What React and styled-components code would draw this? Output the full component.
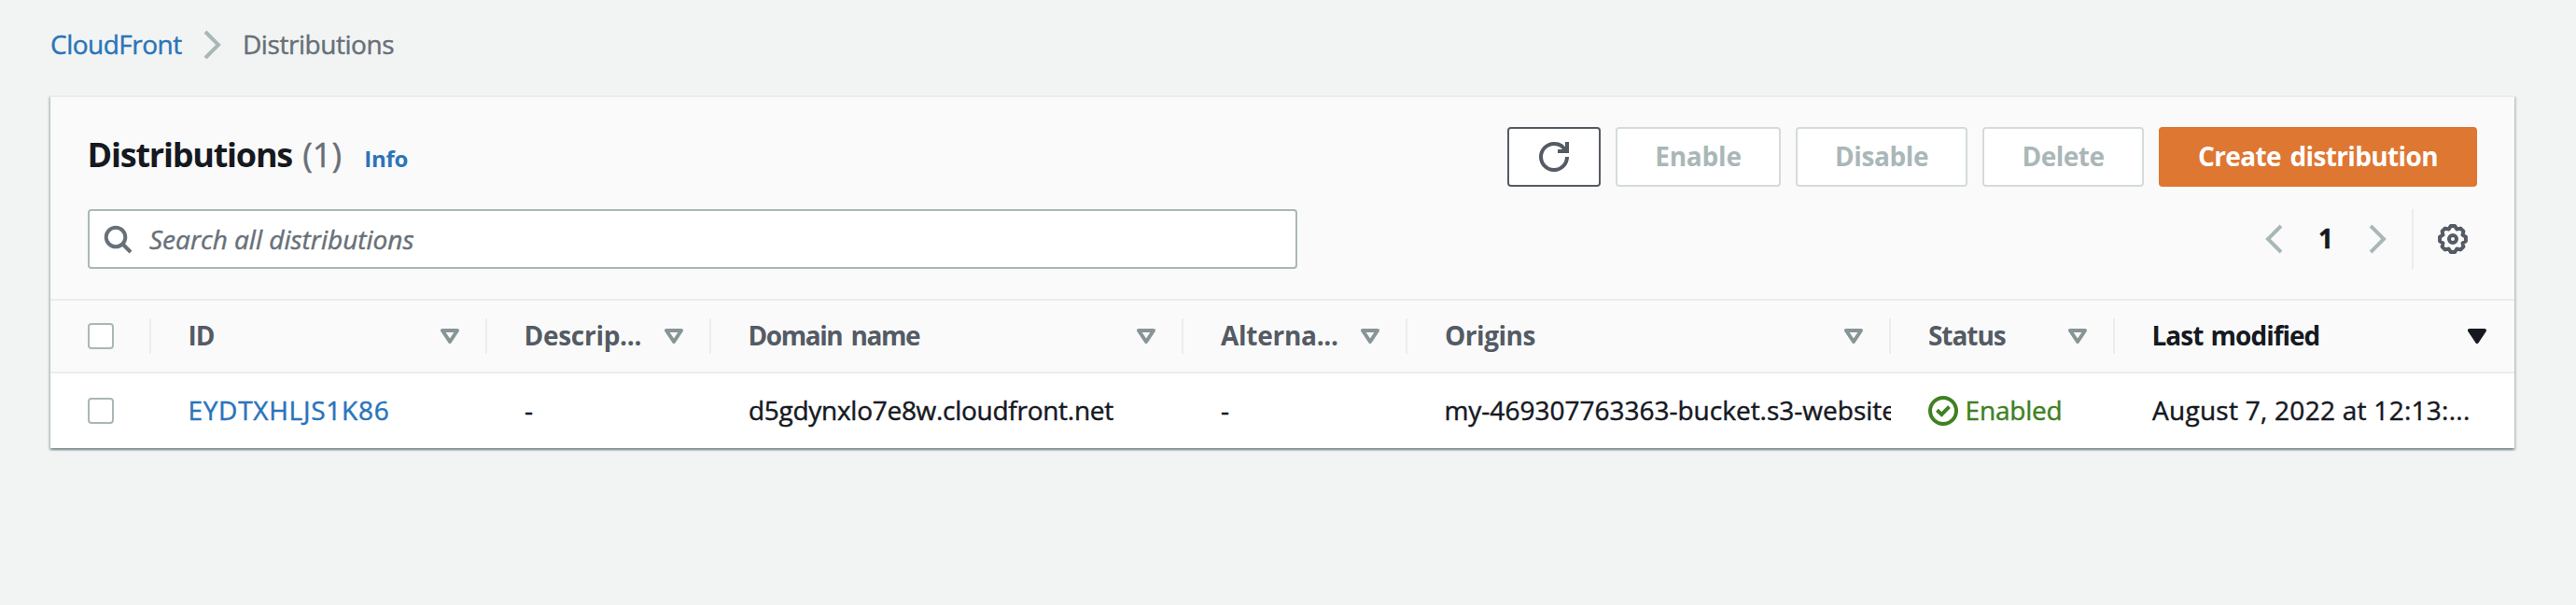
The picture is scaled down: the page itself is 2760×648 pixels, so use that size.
import React from "react";
import styled, { createGlobalStyle, css } from "styled-components";

const colors = {
  page: "#f2f4f3",
  panel: "#fafafa",
  line: "#eaeded",
  text: "#16191f",
  secondary: "#687078",
  strong: "#545b64",
  muted: "#aab7b8",
  disabledBorder: "#d5dbdb",
  link: "#2a74ba",
  primary: "#de7732",
  success: "#3f8121",
  sort: "#879596",
};

const GlobalStyle = createGlobalStyle`
  *, *::before, *::after { box-sizing: border-box; }
  body {
    margin: 0;
    background: ${colors.page};
    color: ${colors.text};
    font-family: "Open Sans", "Noto Sans", sans-serif;
    font-size: 28px;
    line-height: 36px;
    font-kerning: normal;
    -webkit-text-stroke-width: 0.45px;
  }
`;

const Page = styled.main`
  min-height: 648px;
  padding: 30px 66px 0 54px;
`;

const Label = styled.span`
  display: block;
  flex: none;
  white-space: nowrap;
  padding-bottom: 2px;
  letter-spacing: ${(p) => p.$track || 0}px;
  word-spacing: ${(p) => p.$gap || 0}px;
  margin-left: ${(p) => p.$inset || 0}px;
`;

const Breadcrumbs = styled.nav`
  display: flex;
  align-items: center;
  height: 36px;
  color: ${colors.secondary};
`;

const CrumbSeparator = styled.span`
  display: flex;
  width: 32px;
  margin: 0 16px;
  color: ${colors.muted};
`;

const CrumbLink = styled.a`
  display: flex;
  width: 142px;
  color: ${colors.link};
  text-decoration: none;
`;

const Panel = styled.section`
  margin-top: 36px;
  border-top: 2px solid ${colors.line};
  background: #fff;
  box-shadow:
    0 2px 2px 0 rgba(0, 28, 36, 0.3),
    2px 2px 2px 0 rgba(0, 28, 36, 0.15),
    -2px 2px 2px 0 rgba(0, 28, 36, 0.15);
`;

const PanelHeader = styled.header`
  height: 216px;
  padding: 32px 40px 0;
  background: ${colors.panel};
`;

const HeaderRow = styled.div`
  display: flex;
  justify-content: space-between;
  height: 64px;
`;

const ToolRow = styled(HeaderRow)`
  margin-top: 24px;
`;

const Heading = styled.h1`
  display: flex;
  align-items: baseline;
  height: 60px;
  margin: 0;
  font-size: 36px;
  line-height: 60px;
  font-weight: 700;
  -webkit-text-stroke-width: 0;
`;

const TitleText = styled(Label)`
  width: 230.6px;
`;

const Counter = styled(Label)`
  width: 66px;
  color: ${colors.secondary};
  font-weight: 400;
  -webkit-text-stroke-width: 0.45px;
`;

const InfoLink = styled(Label)`
  color: ${colors.link};
  font-size: 24px;
  font-weight: 700;
`;

const Actions = styled.div`
  display: flex;
  gap: 16px;
`;

const Button = styled.button`
  display: flex;
  align-items: center;
  justify-content: center;
  width: ${(p) => p.$width}px;
  height: 64px;
  padding: 0;
  border: 2px solid ${colors.strong};
  border-radius: 4px;
  background: #fff;
  color: ${colors.strong};
  font: inherit;
  font-weight: 700;
  -webkit-text-stroke-width: 0;

  &:disabled {
    border-color: ${colors.disabledBorder};
    color: ${colors.muted};
  }

  ${(p) =>
    p.$primary &&
    css`
      border-color: ${colors.primary};
      background: ${colors.primary};
      color: #fff;
    `}
`;

const SearchBox = styled.label`
  display: flex;
  align-items: center;
  width: 1296px;
  height: 64px;
  padding-left: 14px;
  border: 2px solid ${colors.muted};
  border-radius: 4px;
  background: #fff;
  color: ${colors.secondary};
`;

const SearchInput = styled.input`
  flex: 1;
  margin-left: 18px;
  padding: 0;
  border: 0;
  outline: 0;
  background: transparent;
  font: inherit;
  font-style: italic;

  &::placeholder {
    color: ${colors.secondary};
    opacity: 1;
  }
`;

const Controls = styled.div`
  display: flex;
  align-items: center;
  height: 64px;
`;

const Pagination = styled.div`
  display: flex;
  align-items: center;
  justify-content: space-between;
  width: 144px;
  margin-right: 20px;
  color: ${colors.muted};
`;

const PageNumber = styled(Label)`
  color: ${colors.text};
  font-weight: 700;
`;

const Preferences = styled.div`
  display: flex;
  align-items: center;
  height: 64px;
  padding: 0 10px 0 26px;
  border-left: 2px solid ${colors.line};
  color: ${colors.strong};
`;

const Grid = styled.div`
  display: grid;
  grid-template-columns: 108px 360px 240px 506px 240px 518px 240px 428px;
  align-items: center;
`;

const TableHead = styled(Grid)`
  height: 80px;
  border-top: 2px solid ${colors.line};
  border-bottom: 2px solid ${colors.line};
  background: ${colors.panel};
  color: ${colors.strong};
  font-weight: 700;
  -webkit-text-stroke-width: 0;
`;

const TableRow = styled(Grid)`
  height: 80px;
`;

const CheckCell = styled.div`
  display: flex;
  align-items: center;
  height: 38px;
  padding-left: 40px;
  border-right: 2px solid ${(p) => (p.$divided ? colors.line : "transparent")};
`;

const Checkbox = styled.span`
  width: 28px;
  height: 28px;
  border: 2px solid ${colors.muted};
  border-radius: 4px;
  background: #fff;
`;

const HeadCell = styled.div`
  display: flex;
  align-items: center;
  justify-content: space-between;
  height: 38px;
  padding: 0 28px 0 40px;
  border-right: 2px solid ${colors.line};
  color: ${(p) => (p.$active ? colors.text : "inherit")};

  &:last-child {
    padding-right: 30px;
    border-right: 0;
  }
`;

const Cell = styled.div`
  display: flex;
  align-items: center;
  height: 48px;
  padding-left: 40px;
  overflow: hidden;
  color: ${(p) => p.$color || colors.text};
`;

const Icon = styled.svg`
  display: block;
  flex: none;
  width: ${(p) => p.$w || 32}px;
  height: ${(p) => p.$h || 32}px;
  fill: none;
  stroke: currentColor;
  stroke-width: 4;
`;

const SortIcon = styled(Icon)`
  color: ${(p) => (p.$active ? colors.text : colors.sort)};
  fill: ${(p) => (p.$active ? "currentColor" : "none")};
  stroke-linejoin: round;
`;

const ChevronRight = () => (
  <Icon viewBox="0 0 32 32">
    <path d="M8 2l14 14L8 30" />
  </Icon>
);

const ChevronLeft = () => (
  <Icon viewBox="0 0 32 32">
    <path d="M24 2L10 16l14 14" />
  </Icon>
);

const RefreshIcon = () => (
  <Icon viewBox="0 0 32 32">
    <path d="M20 10h10V0" />
    <path d="M30 16a14 14 0 1 1-14-14 13.7 13.7 0 0 1 12.6 8" />
  </Icon>
);

const SearchIcon = () => (
  <Icon viewBox="0 0 32 32">
    <circle cx="14" cy="14" r="10.3" />
    <path d="M30 30l-9-9" />
  </Icon>
);

const point = (radius, degrees) => {
  const a = (degrees * Math.PI) / 180;
  return `${(16 + radius * Math.sin(a)).toFixed(2)},${(16 - radius * Math.cos(a)).toFixed(2)}`;
};

const gearOutline = Array.from({ length: 8 }, (_, i) => {
  const a = i * 45;
  return [point(14.1, a - 9), point(14.1, a + 9), point(11.4, a + 22.5)].join(" ");
}).join(" ");

const GearIcon = () => (
  <Icon viewBox="0 0 32 32">
    <polygon points={gearOutline} strokeLinejoin="round" />
    <circle cx="16" cy="16" r="4" />
  </Icon>
);

const SuccessIcon = () => (
  <Icon viewBox="0 0 32 32">
    <circle cx="16" cy="16" r="14" />
    <path d="M9.4 15.2l4.9 4.8 8.2-8.4" />
  </Icon>
);

const SortTriangle = ({ active }) => (
  <SortIcon viewBox="0 0 20 16" $w={20} $h={16} $active={active}>
    <path d="M2 2h16l-8 12z" />
  </SortIcon>
);

const columns = [
  { name: "ID", track: -1.2, inset: -0.4 },
  { name: "Descrip...", track: -0.28, inset: -0.5 },
  { name: "Domain name", track: -1.45, gap: 3.5, inset: -0.5 },
  { name: "Alterna...", track: -0.28, inset: 0 },
  { name: "Origins", track: -0.47, inset: 0 },
  { name: "Status", track: -1.05, inset: 0 },
  { name: "Last modified", track: -1, gap: 2, inset: -0.5, active: true },
];

const actions = [
  { name: "Enable", width: 177, track: -0.19 },
  { name: "Disable", width: 184, track: -0.39 },
  { name: "Delete", width: 173, track: -0.5 },
];

export default function App() {
  return (
    <>
      <GlobalStyle />
      <Page>
        <Breadcrumbs>
          <CrumbLink>
            <Label $track={-0.51}>CloudFront</Label>
          </CrumbLink>
          <CrumbSeparator>
            <ChevronRight />
          </CrumbSeparator>
          <Label $track={-0.45}>Distributions</Label>
        </Breadcrumbs>

        <Panel>
          <PanelHeader>
            <HeaderRow>
              <Heading>
                <TitleText $track={-1.23} $inset={-0.4}>Distributions</TitleText>
                <Counter>(1)</Counter>
                <InfoLink as="a" $track={-0.24}>Info</InfoLink>
              </Heading>
              <Actions>
                <Button $width={100} aria-label="Refresh">
                  <RefreshIcon />
                </Button>
                {actions.map((a) => (
                  <Button key={a.name} $width={a.width} disabled>
                    <Label $track={a.track}>{a.name}</Label>
                  </Button>
                ))}
                <Button $width={341} $primary>
                  <Label $track={-0.65} $gap={3}>Create distribution</Label>
                </Button>
              </Actions>
            </HeaderRow>
            <ToolRow>
              <SearchBox>
                <SearchIcon />
                <SearchInput placeholder="Search all distributions" />
              </SearchBox>
              <Controls>
                <Pagination>
                  <ChevronLeft />
                  <PageNumber>1</PageNumber>
                  <ChevronRight />
                </Pagination>
                <Preferences>
                  <GearIcon />
                </Preferences>
              </Controls>
            </ToolRow>
          </PanelHeader>

          <TableHead>
            <CheckCell $divided>
              <Checkbox />
            </CheckCell>
            {columns.map((c) => (
              <HeadCell key={c.name} $active={c.active}>
                <Label $track={c.track} $gap={c.gap} $inset={c.inset}>{c.name}</Label>
                <SortTriangle active={c.active} />
              </HeadCell>
            ))}
          </TableHead>

          <TableRow>
            <CheckCell>
              <Checkbox />
            </CheckCell>
            <Cell $color={colors.link}>
              <Label $track={0.74} $inset={-0.6}>EYDTXHLJS1K86</Label>
            </Cell>
            <Cell>
              <Label>-</Label>
            </Cell>
            <Cell>
              <Label $track={-0.28}>d5gdynxlo7e8w.cloudfront.net</Label>
            </Cell>
            <Cell>
              <Label>-</Label>
            </Cell>
            <Cell>
              <Label $inset={-0.6}>my-469307763363-bucket.s3-website</Label>
            </Cell>
            <Cell $color={colors.success}>
              <SuccessIcon />
              <Label $track={-0.2} $inset={7.6}>Enabled</Label>
            </Cell>
            <Cell>
              <Label $track={0.27}>August 7, 2022 at 12:13:...</Label>
            </Cell>
          </TableRow>
        </Panel>
      </Page>
    </>
  );
}
